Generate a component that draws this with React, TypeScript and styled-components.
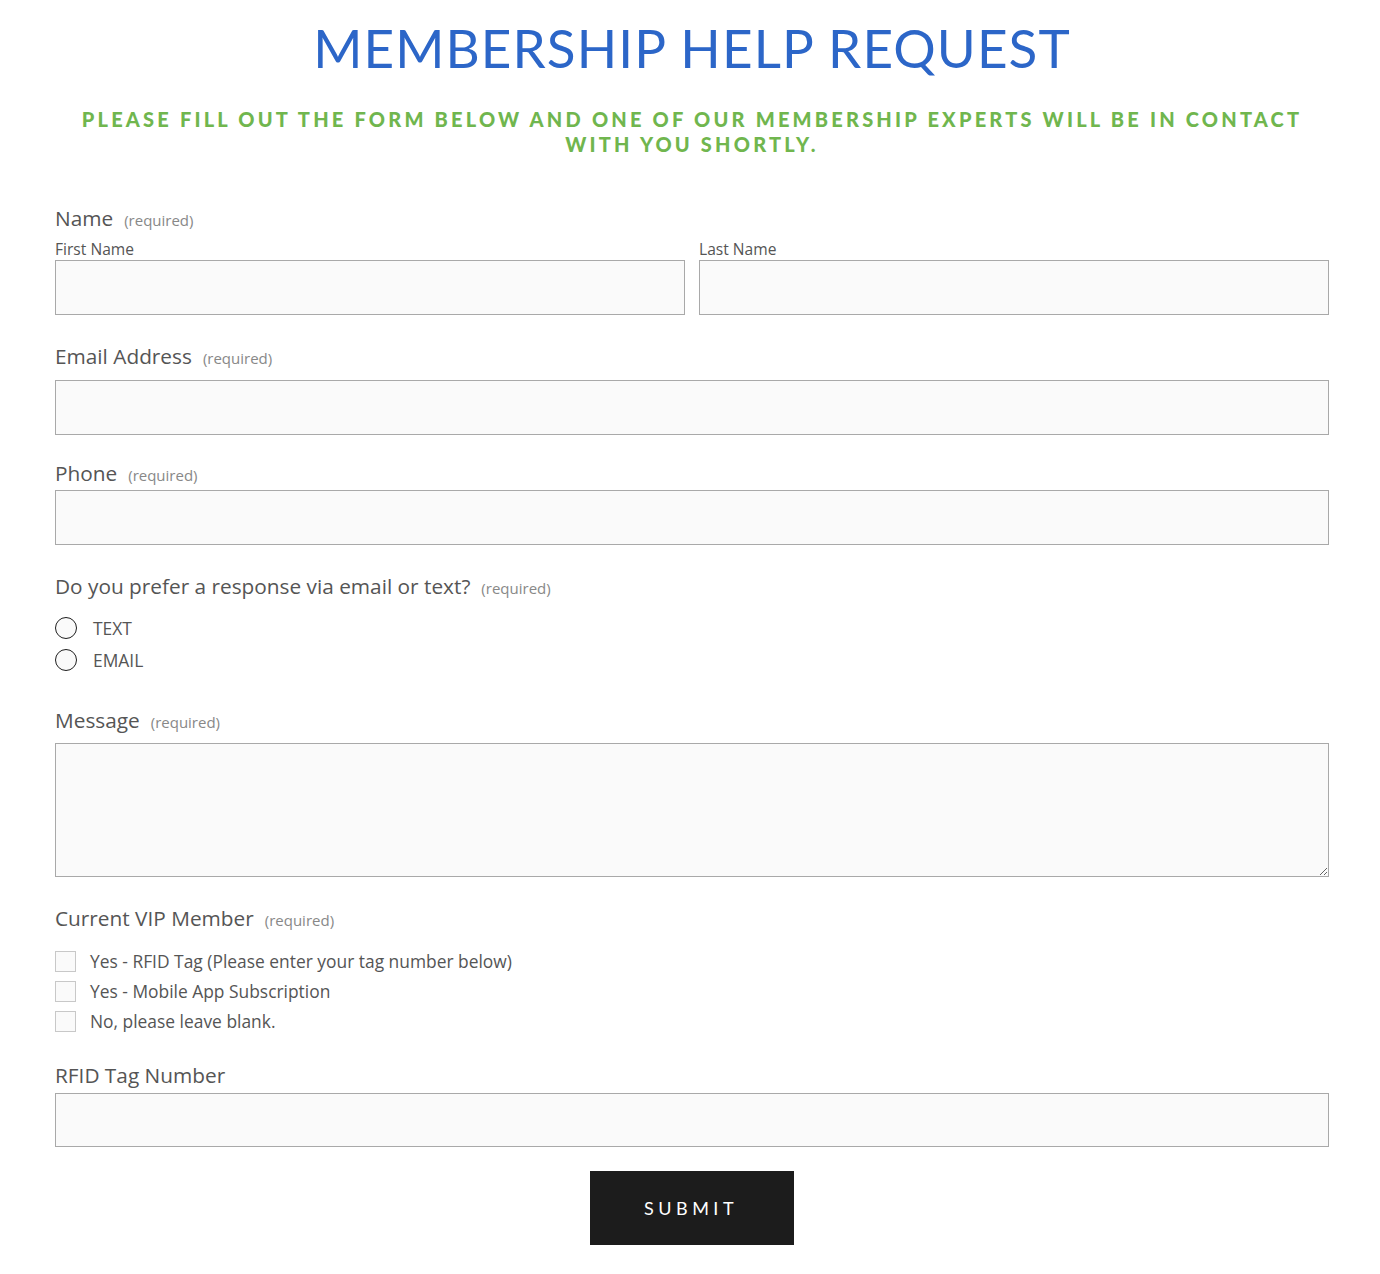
import React from 'react';
import styled, { createGlobalStyle } from 'styled-components';

const GlobalStyle = createGlobalStyle`
  html, body {
    margin: 0;
    padding: 0;
    background: #fff;
  }
  body {
    font-family: 'Open Sans', 'Lato', sans-serif;
    color: #555;
  }
  * { box-sizing: border-box; }
`;

const Page = styled.div`
  width: 1380px;
  padding: 18px 51px 29px 55px;
`;

const Title = styled.h1`
  margin: 0;
  text-align: center;
  font-family: 'Lato', sans-serif;
  font-weight: 400;
  font-size: 53px;
  line-height: 60px;
  letter-spacing: 1.1px;
  color: #2c66c8;
`;

const Subtitle = styled.p`
  margin: 29px 0 0;
  text-align: center;
  font-family: 'Lato', sans-serif;
  font-weight: 900;
  font-size: 20px;
  line-height: 25px;
  letter-spacing: 3.2px;
  color: #70b64e;
  text-transform: uppercase;
`;

const Form = styled.form`
  display: flex;
  flex-direction: column;
`;

const Legend = styled.div<{ $top: number; $bottom: number }>`
  display: flex;
  align-items: baseline;
  gap: 11px;
  height: 24px;
  margin-top: ${(p) => p.$top}px;
  margin-bottom: ${(p) => p.$bottom}px;
  font-size: 20.8px;
  line-height: 24px;
  color: #555;
`;

const Required = styled.span`
  font-size: 15px;
  line-height: 24px;
  color: #888;
`;

const Columns = styled.div`
  display: grid;
  grid-template-columns: 1fr 1fr;
  gap: 14px;
`;

const SubField = styled.label`
  display: flex;
  flex-direction: column;
  gap: 2px;
`;

const SubLabel = styled.span`
  font-size: 15.6px;
  line-height: 18px;
  height: 18px;
  color: #555;
`;

const TextInput = styled.input<{ $h?: number }>`
  display: block;
  width: 100%;
  height: ${(p) => p.$h ?? 55}px;
  margin: 0;
  padding: 12px;
  border: 1px solid #a9a9a9;
  border-radius: 0;
  background: #fafafa;
  font: inherit;
  font-size: 16px;
  color: #333;
  outline: none;
`;

const TextArea = styled.textarea`
  display: block;
  width: 100%;
  height: 134px;
  margin: 0;
  padding: 12px;
  border: 1px solid #a9a9a9;
  border-radius: 0;
  background: #fafafa;
  font: inherit;
  font-size: 16px;
  resize: vertical;
  outline: none;
`;

const OptionList = styled.div<{ $row: number }>`
  display: flex;
  flex-direction: column;
  & > label { height: ${(p) => p.$row}px; }
`;

const Option = styled.label<{ $gap: number }>`
  display: flex;
  align-items: center;
  gap: ${(p) => p.$gap}px;
  font-size: 17.4px;
  line-height: 24px;
  color: #555;
  cursor: pointer;
`;

const Radio = styled.input.attrs({ type: 'radio' })`
  appearance: none;
  margin: 0;
  width: 22px;
  height: 22px;
  border: 1.3px solid #1e1e1e;
  border-radius: 50%;
  background: #fafafa;
  flex-shrink: 0;
`;

const Checkbox = styled.input.attrs({ type: 'checkbox' })`
  appearance: none;
  margin: 0;
  width: 21px;
  height: 21px;
  border: 1px solid #c8c8c8;
  border-radius: 0;
  background: #fafafa;
  flex-shrink: 0;
`;

const SubmitRow = styled.div`
  display: flex;
  justify-content: center;
  margin-top: 24px;
`;

const SubmitButton = styled.button`
  width: 204px;
  height: 74px;
  border: none;
  border-radius: 0;
  background: #1c1c1c;
  color: #fff;
  font-family: 'Lato', sans-serif;
  font-size: 18px;
  letter-spacing: 4.5px;
  padding-left: 4px;
  cursor: pointer;
`;

const App: React.FC = () => (
  <Page>
    <GlobalStyle />
    <Title>MEMBERSHIP HELP REQUEST</Title>
    <Subtitle>
      Please fill out the form below and one of our membership experts will be in contact with you shortly.
    </Subtitle>
    <Form onSubmit={(e) => e.preventDefault()}>
      <Legend $top={49} $bottom={10}>
        Name <Required>(required)</Required>
      </Legend>
      <Columns>
        <SubField>
          <SubLabel>First Name</SubLabel>
          <TextInput />
        </SubField>
        <SubField>
          <SubLabel>Last Name</SubLabel>
          <TextInput />
        </SubField>
      </Columns>

      <Legend $top={29} $bottom={12}>
        Email Address <Required>(required)</Required>
      </Legend>
      <TextInput type="email" />

      <Legend $top={26} $bottom={5}>
        Phone <Required>(required)</Required>
      </Legend>
      <TextInput type="tel" />

      <Legend $top={29} $bottom={14}>
        Do you prefer a response via email or text? <Required>(required)</Required>
      </Legend>
      <OptionList $row={32}>
        <Option $gap={16}>
          <Radio name="contact" /> TEXT
        </Option>
        <Option $gap={16}>
          <Radio name="contact" /> EMAIL
        </Option>
      </OptionList>

      <Legend $top={32} $bottom={11}>
        Message <Required>(required)</Required>
      </Legend>
      <TextArea />

      <Legend $top={29} $bottom={16}>
        Current VIP Member <Required>(required)</Required>
      </Legend>
      <OptionList $row={30}>
        <Option $gap={14}>
          <Checkbox /> Yes - RFID Tag (Please enter your tag number below)
        </Option>
        <Option $gap={14}>
          <Checkbox /> Yes - Mobile App Subscription
        </Option>
        <Option $gap={14}>
          <Checkbox /> No, please leave blank.
        </Option>
      </OptionList>

      <Legend $top={27} $bottom={6}>
        RFID Tag Number
      </Legend>
      <TextInput $h={54} />

      <SubmitRow>
        <SubmitButton type="submit">SUBMIT</SubmitButton>
      </SubmitRow>
    </Form>
  </Page>
);

export default App;
